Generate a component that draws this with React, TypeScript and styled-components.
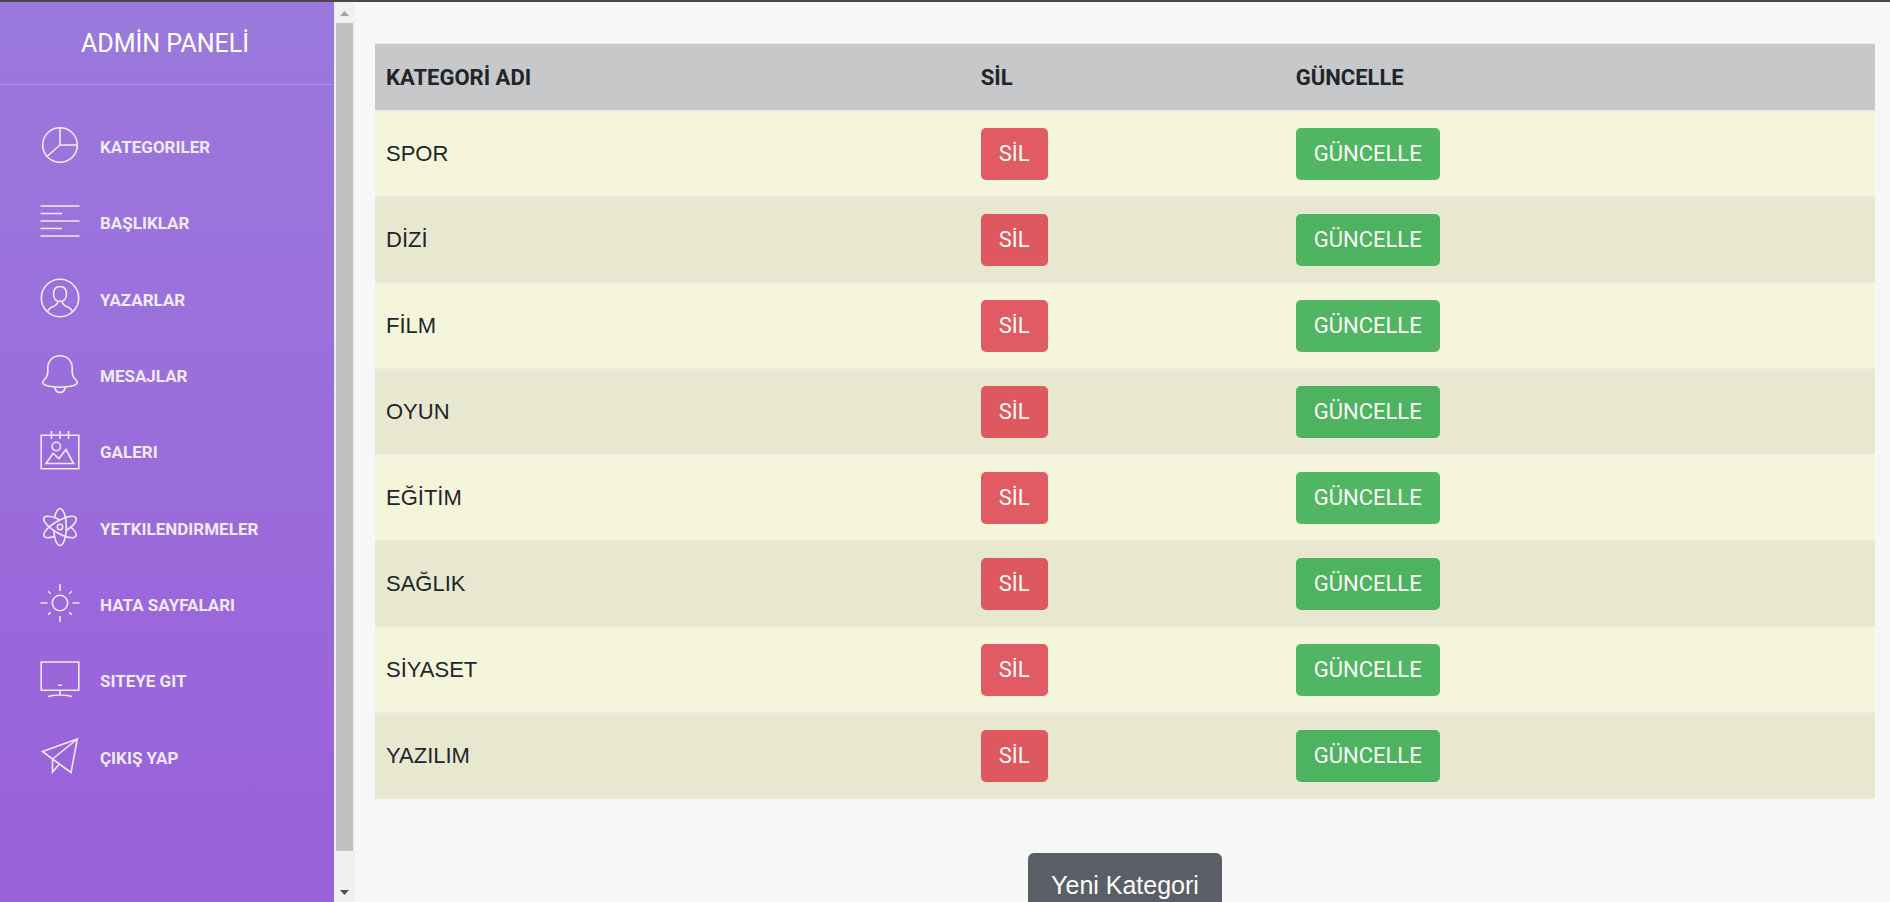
import React from "react";
import styled, { createGlobalStyle } from "styled-components";

const GlobalStyle = createGlobalStyle`
  * { box-sizing: border-box; }
  body { margin: 0; background: #f7f7f7; overflow: hidden; }
`;

const Page = styled.div`
  display: flex;
  height: 100vh;
  border-top: 2px solid #4a4747;
  font-family: Roboto, "Liberation Sans", sans-serif;
  color: #212529;
`;

const Sidebar = styled.aside`
  flex: none;
  width: 334px;
  overflow: hidden;
  background: linear-gradient(#9b79dc, #9a60da);
  color: #fff;
`;

const Brand = styled.a`
  display: block;
  padding: 25px 4px 24px 0;
  margin-bottom: 22px;
  border-bottom: 1px solid #b08fe6;
  color: inherit;
  font-size: 25px;
  line-height: 33px;
  text-align: center;
  text-decoration: none;
`;

const Menu = styled.nav`
  display: grid;
  grid-auto-rows: 1fr;
  min-height: 687px;
`;

const MenuLink = styled.a`
  display: flex;
  align-items: center;
  gap: 20px;
  padding: 0 40px;
  color: inherit;
  text-decoration: none;
  opacity: 0.86;
`;

const MenuIcon = styled.svg`
  flex: none;
  width: 40px;
  height: 40px;
  fill: none;
  stroke: currentColor;
  stroke-width: 1.6;
`;

const MenuLabel = styled.span`
  padding-top: 4px;
  font-size: 17px;
  font-weight: 700;
  line-height: 20px;
`;

const ScrollTrack = styled.div`
  flex: none;
  display: flex;
  flex-direction: column;
  width: 21px;
  padding: 0 2px;
  background: #f0f0f0;
`;

const ScrollArrow = styled.svg<{ $color: string }>`
  flex: none;
  display: block;
  width: 17px;
  height: 21px;
  fill: ${(p) => p.$color};
`;

const ScrollThumb = styled.div`
  flex: none;
  height: 92%;
  background: #c1c1c1;
`;

const ScrollGap = styled.div`
  flex: 1;
`;

const Main = styled.main`
  flex: 1;
  min-width: 0;
  padding: 41px 15px 0 20px;
  overflow: hidden;
`;

const Table = styled.table`
  width: 100%;
  table-layout: fixed;
  border-collapse: collapse;
  font-size: 22px;
  line-height: 30px;
  text-align: left;
`;

const NameCol = styled.col`
  width: 39.65%;
`;

const DeleteCol = styled.col`
  width: 21%;
`;

const HeadCell = styled.th`
  height: 67px;
  padding: 2px 11px 0;
  background: #c6c8ca;
  border-top: 1px solid #e9ecef;
  border-bottom: 2px solid #e9ecef;
  font-weight: 700;
`;

const Row = styled.tr`
  background: #f5f5dc;
  &:nth-child(even) { background: #e8e8d1; }
`;

const Cell = styled.td`
  height: 86px;
  padding: 0 11px;
  border-top: 1px solid #e9ecef;
  font-family: "Liberation Sans", Arial, sans-serif;
  vertical-align: middle;
`;

const Button = styled.button<{ $color: string }>`
  display: block;
  padding: 11px 18px;
  border: 0;
  border-radius: 5px;
  background: ${(p) => p.$color};
  color: #fff;
  font: 400 22px/30px Roboto, sans-serif;
  opacity: 0.8;
`;

const NewButton = styled(Button)`
  margin: 54px auto 0;
  padding: 16px 23px;
  border-radius: 6px;
  font: 400 25px/32px "Liberation Sans", Arial, sans-serif;
`;

const orbit = "M14.5 11A6.3 18.5 0 1 1 13.84 24";

const menu: { label: string; icon: React.ReactNode }[] = [
  {
    label: "KATEGORILER",
    icon: <path d="M20 20m-17.3 0a17.3 17.3 0 1 0 34.6 0a17.3 17.3 0 1 0-34.6 0M20 2.7V20H37.3M20 20L7.5 31" />,
  },
  {
    label: "BAŞLIKLAR",
    icon: <path d="M.5 5h39M.5 12.500H22M.5 20h39M.5 27.500H22M.5 35h39" />,
  },
  {
    label: "YAZARLAR",
    icon: (
      <>
        <circle cx="20" cy="20" r="18.700" />
        <path d="M20 8.500c-4.500 0-6.500 3-6.500 7.500 0 5 3 7.500 6.500 7.500s6.500-2.500 6.500-7.500c0-4.500-2-7.500-6.500-7.500zM17.800 23.500c0 6-8.800 4-10.300 10.500M22.200 23.500c0 6 8.800 4 10.300 10.500" />
      </>
    ),
  },
  {
    label: "MESAJLAR",
    icon: (
      <path d="M20 1.700C12.500 1.700 7.800 7 7.800 14v4c0 7-5.100 7.500-5.100 10.500 0 2.500 6.500 4.700 17.300 4.700s17.300-2.200 17.300-4.700c0-3-5.100-3.500-5.100-10.500v-4c0-7-4.700-12.300-12.200-12.300zM14.800 33.500c.5 3 2.200 5 5.200 5s4.700-2 5.200-5" />
    ),
  },
  {
    label: "GALERI",
    icon: (
      <>
        <path d="M1.200 5.200h37.600v33.600H1.200zM11.500 1v8M20 1v8M28.500 1v8M6 33.500L13 23.500l6 5L26 19.500l7.500 14z" />
        <circle cx="16.300" cy="16.500" r="4.200" />
      </>
    ),
  },
  {
    label: "YETKILENDIRMELER",
    icon: (
      <>
        <path d={orbit} />
        <path d={orbit} transform="rotate(120 20 20)" />
        <path d={orbit} transform="rotate(240 20 20)" />
        <circle cx="20" cy="20" r="2.700" />
      </>
    ),
  },
  {
    label: "HATA SAYFALARI",
    icon: (
      <>
        <circle cx="20" cy="20" r="7.700" />
        <path d="M20 1v7M20 33v6M.5 20h7M32.500 20h7M8.300 8.300l2.400 2.400M31.700 8.300l-2.400 2.400M8.300 31.700l2.400-2.400M31.700 31.700l-2.400-2.400" />
      </>
    ),
  },
  {
    label: "SITEYE GIT",
    icon: <path d="M1.200 3h37.600v28.200H1.200zM18 26.300h4M20 31.200V36M8 37.500c7-1.700 17-1.700 24 0" />,
  },
  {
    label: "ÇIKIŞ YAP",
    icon: <path d="M2.500 15.500L37.300 3 31 36.500 12.500 23zM12.500 23L37.300 3M12.500 23V36l6.500-7.500" />,
  },
];

const categories = ["SPOR", "DİZİ", "FİLM", "OYUN", "EĞİTİM", "SAĞLIK", "SİYASET", "YAZILIM"];

export default function App() {
  return (
    <>
      <GlobalStyle />
      <Page>
        <Sidebar>
          <Brand href="#">ADMİN PANELİ</Brand>
          <Menu>
            {menu.map((item) => (
              <MenuLink href="#" key={item.label}>
                <MenuIcon viewBox="0 0 40 40" aria-hidden="true">{item.icon}</MenuIcon>
                <MenuLabel>{item.label}</MenuLabel>
              </MenuLink>
            ))}
          </Menu>
        </Sidebar>
        <ScrollTrack aria-hidden="true">
          <ScrollArrow $color="#a3a3a3" viewBox="0 0 17 21"><path d="M4 14L8.500 9L13 14z" /></ScrollArrow>
          <ScrollThumb />
          <ScrollGap />
          <ScrollArrow $color="#505050" viewBox="0 0 17 21"><path d="M4 9L8.500 14L13 9z" /></ScrollArrow>
        </ScrollTrack>
        <Main>
          <Table>
            <colgroup>
              <NameCol />
              <DeleteCol />
              <col />
            </colgroup>
            <thead>
              <tr>
                <HeadCell>KATEGORİ ADI</HeadCell>
                <HeadCell>SİL</HeadCell>
                <HeadCell>GÜNCELLE</HeadCell>
              </tr>
            </thead>
            <tbody>
              {categories.map((name) => (
                <Row key={name}>
                  <Cell>{name}</Cell>
                  <Cell><Button $color="#dc3545">SİL</Button></Cell>
                  <Cell><Button $color="#28a745">GÜNCELLE</Button></Cell>
                </Row>
              ))}
            </tbody>
          </Table>
          <NewButton $color="#343842">Yeni Kategori</NewButton>
        </Main>
      </Page>
    </>
  );
}
